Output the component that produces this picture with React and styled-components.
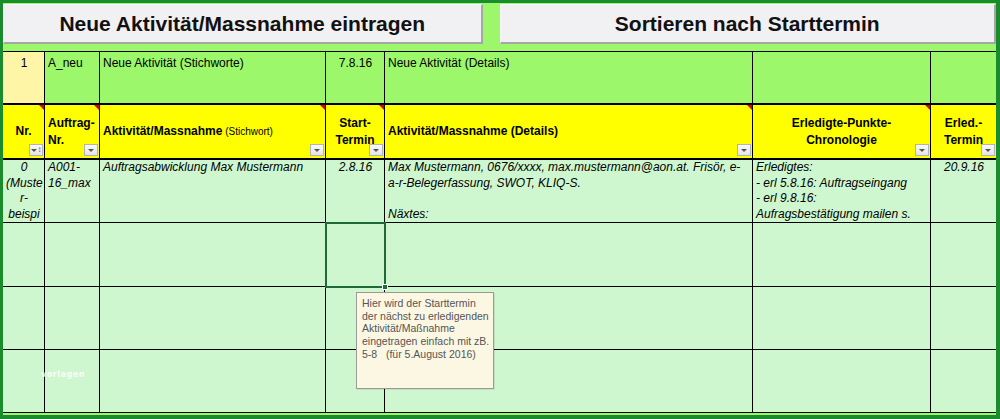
import React from "react";
import styled, { createGlobalStyle } from "styled-components";

const GlobalStyle = createGlobalStyle`
  html, body { margin: 0; padding: 0; background: #fff; }
  body { font-family: "Liberation Sans", Arial, sans-serif; }
`;

const COLS = [42, 55, 226, 59, 368, 178, 65];
const ROWS = [53, 55, 63, 64, 63, 63];

const LIGHT = "#9cf76a";
const PALE = "#cff7cf";
const YELLOW = "#ffff00";
const NR_YELLOW = "#fff5a6";

const Frame = styled.div`
  position: relative;
  box-sizing: border-box;
  width: 1000px;
  height: 419px;
  border: 3px solid #1a8c2e;
  border-right-width: 4px;
  border-bottom-width: 4px;
  background: ${LIGHT};
  overflow: hidden;
`;

const ButtonBar = styled.div`
  display: flex;
  gap: 17px;
  height: 40px;
  margin-top: 1px;
`;

const MacroButton = styled.div`
  box-sizing: border-box;
  width: ${(p) => p.$w}px;
  display: flex;
  align-items: center;
  justify-content: center;
  background: #f1f0f3;
  border-top: 1px solid #fbfbfb;
  border-left: 1px solid #fbfbfb;
  border-right: 2px solid #a6a6a6;
  border-bottom: 2px solid #a6a6a6;
  font-family: "Liberation Sans", Arial, sans-serif;
  font-weight: bold;
  font-size: 21px;
  color: #111;
`;

const Sheet = styled.div`
  position: relative;
  margin-top: 7px;
  display: grid;
  grid-template-columns: ${COLS.map((c) => c + "px").join(" ")};
  grid-template-rows: ${ROWS.map((r) => r + "px").join(" ")};
  border-top: 1px solid #000;
`;

const Cell = styled.div`
  position: relative;
  box-sizing: border-box;
  background: ${(p) => p.$bg};
  border-right: ${(p) => (p.$last ? "none" : "1px solid #000")};
  border-bottom: ${(p) => (p.$thick ? 2 : 1)}px solid #000;
  padding: ${(p) => (p.$head ? "0 3px" : `${p.$top || 0}px 2px 0 3px`)};
  overflow: ${(p) => (p.$selected ? "visible" : "hidden")};
  font-family: "Liberation Sans", Arial, sans-serif;
  font-size: 12px;
  line-height: ${(p) => (p.$head ? "17px" : p.$italic ? "15.6px" : "16px")};
  font-weight: ${(p) => (p.$head ? "bold" : "normal")};
  font-style: ${(p) => (p.$italic ? "italic" : "normal")};
  text-align: ${(p) => p.$align};
  color: #000;
  white-space: pre-line;
  display: ${(p) => (p.$head ? "flex" : "block")};
  flex-direction: column;
  justify-content: center;
  align-items: ${(p) => (p.$align === "center" ? "center" : "flex-start")};
  outline: ${(p) => (p.$selected ? "2px solid #1e6b3a" : "none")};
  outline-offset: -1px;
  z-index: ${(p) => (p.$selected ? 2 : 0)};
`;

const Small = styled.span`
  font-weight: normal;
  font-size: 10px;
`;

const CommentMark = styled.span`
  position: absolute;
  top: 0;
  right: 0;
  width: 0;
  height: 0;
  border-top: 5px solid #e00000;
  border-left: 5px solid transparent;
`;

const FilterBtn = styled.span`
  position: absolute;
  right: 1px;
  bottom: 2px;
  box-sizing: border-box;
  width: 14px;
  height: 12px;
  background: linear-gradient(#fafafa, #e4e4e4);
  border: 1px solid #b3b3b3;
  display: flex;
  align-items: center;
  justify-content: center;
  gap: 1px;
`;

const Arrow = styled.span`
  width: 0;
  height: 0;
  border-left: 3px solid transparent;
  border-right: 3px solid transparent;
  border-top: 3px solid #555;
`;

const SortGlyph = styled.span`
  font-size: 8px;
  line-height: 8px;
  font-weight: normal;
  color: #555;
`;

const Handle = styled.span`
  position: absolute;
  right: -4px;
  bottom: -4px;
  width: 6px;
  height: 6px;
  background: #1e6b3a;
  border: 1px solid #fff;
  box-sizing: border-box;
`;

const Comment = styled.div`
  position: absolute;
  left: 353px;
  top: 240px;
  box-sizing: border-box;
  width: 138px;
  height: 97px;
  padding: 4px 5px;
  background: #fcf7e3;
  border: 1px solid #9a9a9a;
  box-shadow: 1px 1px 0 rgba(0, 0, 0, 0.08);
  font-family: "Liberation Sans", Arial, sans-serif;
  font-size: 10.5px;
  line-height: 12.7px;
  color: #555;
  white-space: pre;
  z-index: 5;
`;

const Watermark = styled.span`
  position: absolute;
  left: 38px;
  top: 317px;
  font-family: "DejaVu Sans Condensed", "DejaVu Sans", sans-serif;
  font-size: 9px;
  font-weight: bold;
  letter-spacing: 0.5px;
  color: rgba(255, 255, 255, 0.85);
`;

const alignOf = ["center", "left", "left", "center", "left", "center", "center"];

const row1 = ["1", "A_neu", "Neue Aktivität (Stichworte)", "7.8.16", "Neue Aktivität (Details)", "", ""];

const header = [
  { text: "Nr.", sort: true },
  { text: "Auftrag-\nNr." },
  { text: "Aktivität/Massnahme", small: " (Stichwort)" },
  { text: "Start-\nTermin" },
  { text: "Aktivität/Massnahme (Details)" },
  { text: "Erledigte-Punkte-\nChronologie" },
  { text: "Erled.-\nTermin", noMark: true },
];

const dataRow = [
  "0\n(Muste\nr-\nbeispi",
  "A001-\n16_max",
  "Auftragsabwicklung Max Mustermann",
  "2.8.16",
  "Max Mustermann, 0676/xxxx, max.mustermann@aon.at. Frisör, e-\na-r-Belegerfassung, SWOT, KLIQ-S.\n\nNäxtes:",
  "Erledigtes:\n- erl 5.8.16: Auftragseingang\n- erl 9.8.16:\nAufragsbestätigung mailen s.",
  "20.9.16",
];

export default function App() {
  const last = (i) => i === COLS.length - 1;
  return (
    <>
      <GlobalStyle />
      <Frame>
        <ButtonBar>
          <MacroButton $w={480}>Neue Aktivität/Massnahme eintragen</MacroButton>
          <MacroButton $w={497}>Sortieren nach Starttermin</MacroButton>
        </ButtonBar>
        <Sheet>
          {row1.map((t, i) => (
            <Cell
              key={"a" + i}
              $bg={i === 0 ? NR_YELLOW : LIGHT}
              $align={i === 0 || i === 3 ? "center" : "left"}
              $last={last(i)}
              $top={3}
              $thick
            >
              {t}
            </Cell>
          ))}
          {header.map((h, i) => (
            <Cell
              key={"h" + i}
              $bg={YELLOW}
              $head
              $align={alignOf[i]}
              $last={last(i)}
              $thick
            >
              <span>
                {h.text}
                {h.small && <Small>{h.small}</Small>}
              </span>
              {!h.noMark && <CommentMark />}
              <FilterBtn>
                {h.sort ? (
                  <>
                    <Arrow />
                    <SortGlyph>↕</SortGlyph>
                  </>
                ) : (
                  <Arrow />
                )}
              </FilterBtn>
            </Cell>
          ))}
          {dataRow.map((t, i) => (
            <Cell
              key={"d" + i}
              $bg={PALE}
              $italic
              $align={i === 0 || i === 3 || i === 6 ? "center" : "left"}
              $last={last(i)}
            >
              {t}
            </Cell>
          ))}
          {[0, 1, 2].map((r) =>
            COLS.map((_, i) => (
              <Cell
                key={"e" + r + "-" + i}
                $bg={PALE}
                $align="left"
                $last={last(i)}
                $selected={r === 0 && i === 3}
              >
                {r === 0 && i === 3 && <Handle />}
              </Cell>
            ))
          )}
          <Comment>
            {"Hier wird der Starttermin\nder nächst zu erledigenden\nAktivität/Maßnahme\neingetragen einfach mit zB.\n5-8   (für 5.August 2016)"}
          </Comment>
          <Watermark>vorlagen</Watermark>
        </Sheet>
      </Frame>
    </>
  );
}
